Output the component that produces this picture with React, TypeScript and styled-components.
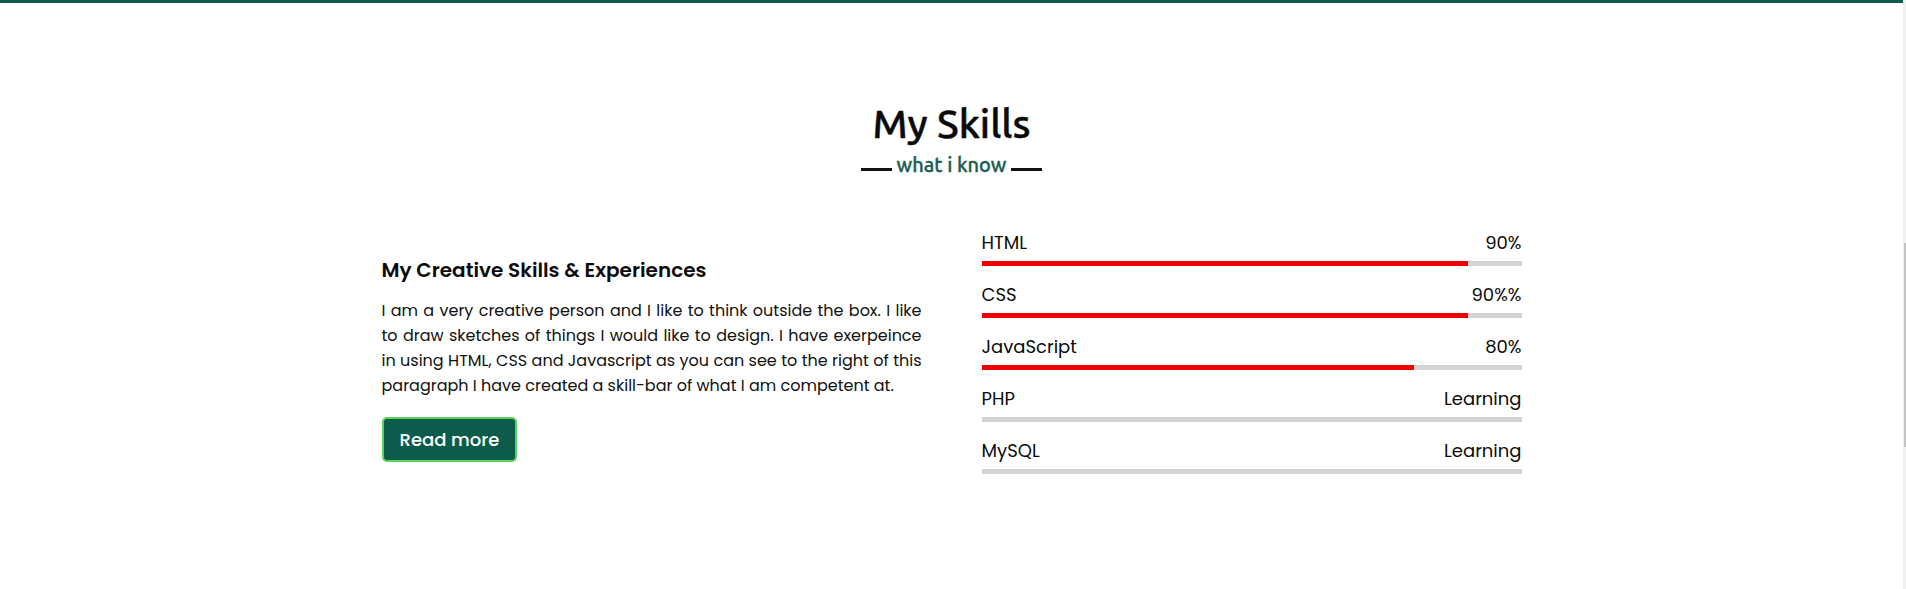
import React from "react";
import styled, { createGlobalStyle } from "styled-components";

const GlobalStyle = createGlobalStyle`
  html, body {
    margin: 0;
    padding: 0;
    background: #ffffff;
  }
  body {
    font-family: "Poppins", "Inter", "Open Sans", sans-serif;
    color: #111111;
  }
  * {
    box-sizing: border-box;
  }
`;

const Page = styled.div`
  display: flex;
  min-height: 100vh;
  width: 100%;
`;

const Main = styled.main`
  flex: 1;
  display: flex;
  flex-direction: column;
  min-width: 0;
`;

const TopBar = styled.div`
  height: 3px;
  background: #0d5c4b;
`;

const ScrollTrack = styled.div`
  width: 3px;
  background: #f0f0f0;
  padding-top: 243px;
  display: flex;
  justify-content: flex-end;
  align-items: flex-start;
`;

const ScrollThumb = styled.div`
  width: 2px;
  height: 204px;
  background: #c3c3c3;
`;

const Section = styled.section`
  padding-top: 98px;
  display: flex;
  flex-direction: column;
  align-items: center;
`;

const Title = styled.h2`
  margin: 0;
  font-family: "Ubuntu", "Inter", "Open Sans", sans-serif;
  font-size: 40px;
  font-weight: 500;
  line-height: 46px;
  color: #0a0a0a;
  -webkit-text-stroke: 0.5px #0a0a0a;
`;

const SubtitleRow = styled.div`
  width: 181px;
  display: flex;
  align-items: flex-start;
  margin-top: 6px;
`;

const Rule = styled.span`
  flex: 1;
  height: 3px;
  margin-top: 15px;
  background: #111111;
`;

const Subtitle = styled.span`
  padding: 0 5px;
  font-family: "Ubuntu", "Inter", "Open Sans", sans-serif;
  font-size: 20px;
  font-weight: 500;
  line-height: 24px;
  color: #1b5e50;
  -webkit-text-stroke: 0.35px #1b5e50;
`;

const Content = styled.div`
  width: 1140px;
  margin-top: 52px;
  display: flex;
  justify-content: space-between;
  align-items: flex-start;
`;

const LeftColumn = styled.div`
  width: 540px;
  padding-top: 26px;
  display: flex;
  flex-direction: column;
  align-items: flex-start;
`;

const Heading = styled.h3`
  margin: 0 0 13px;
  font-size: 20px;
  font-weight: 600;
  line-height: 30px;
  color: #0a0a0a;
`;

const Paragraph = styled.p`
  margin: 0;
  width: 100%;
  font-size: 16px;
  line-height: 25px;
  color: #111111;
`;

const ParaLine = styled.span<{ $last?: boolean }>`
  display: block;
  text-align: justify;
  text-align-last: ${(p) => (p.$last ? "left" : "justify")};
`;

const ReadMore = styled.a`
  display: inline-block;
  margin-top: 19px;
  padding: 8px 16px;
  border: 2px solid #5bd35b;
  border-radius: 5px;
  background: #0d5c4b;
  color: #ffffff;
  font-size: 18px;
  font-weight: 500;
  line-height: 25px;
  text-decoration: none;
  cursor: pointer;
`;

const RightColumn = styled.div`
  width: 540px;
  display: flex;
  flex-direction: column;
  gap: 15px;
`;

const Bars = styled.div`
  display: flex;
  flex-direction: column;
`;

const Info = styled.div`
  display: flex;
  justify-content: space-between;
  align-items: center;
  margin-bottom: 5px;
  font-size: 18px;
  line-height: 27px;
  color: #0a0a0a;
`;

const Track = styled.div`
  height: 5px;
  background: #d3d3d3;
  display: flex;
`;

const Fill = styled.div<{ $pct: number }>`
  width: ${(p) => p.$pct}%;
  height: 100%;
  background: #f00000;
`;

const skills = [
  { name: "HTML", value: "90%", pct: 90 },
  { name: "CSS", value: "90%%", pct: 90 },
  { name: "JavaScript", value: "80%", pct: 80 },
  { name: "PHP", value: "Learning", pct: 0 },
  { name: "MySQL", value: "Learning", pct: 0 },
];

const lines = [
  "I am a very creative person and I like to think outside the box. I like",
  "to draw sketches of things I would like to design. I have exerpeince",
  "in using HTML, CSS and Javascript as you can see to the right of this",
  "paragraph I have created a skill-bar of what I am competent at.",
];

export default function App() {
  return (
    <>
      <GlobalStyle />
      <Page>
        <Main>
          <TopBar />
          <Section>
            <Title>My Skills</Title>
            <SubtitleRow>
              <Rule />
              <Subtitle>what i know</Subtitle>
              <Rule />
            </SubtitleRow>
            <Content>
              <LeftColumn>
                <Heading>My Creative Skills &amp; Experiences</Heading>
                <Paragraph>
                  {lines.map((l, i) => (
                    <ParaLine key={i} $last={i === lines.length - 1}>
                      {l}
                    </ParaLine>
                  ))}
                </Paragraph>
                <ReadMore>Read more</ReadMore>
              </LeftColumn>
              <RightColumn>
                {skills.map((s) => (
                  <Bars key={s.name}>
                    <Info>
                      <span>{s.name}</span>
                      <span>{s.value}</span>
                    </Info>
                    <Track>
                      <Fill $pct={s.pct} />
                    </Track>
                  </Bars>
                ))}
              </RightColumn>
            </Content>
          </Section>
        </Main>
        <ScrollTrack>
          <ScrollThumb />
        </ScrollTrack>
      </Page>
    </>
  );
}
